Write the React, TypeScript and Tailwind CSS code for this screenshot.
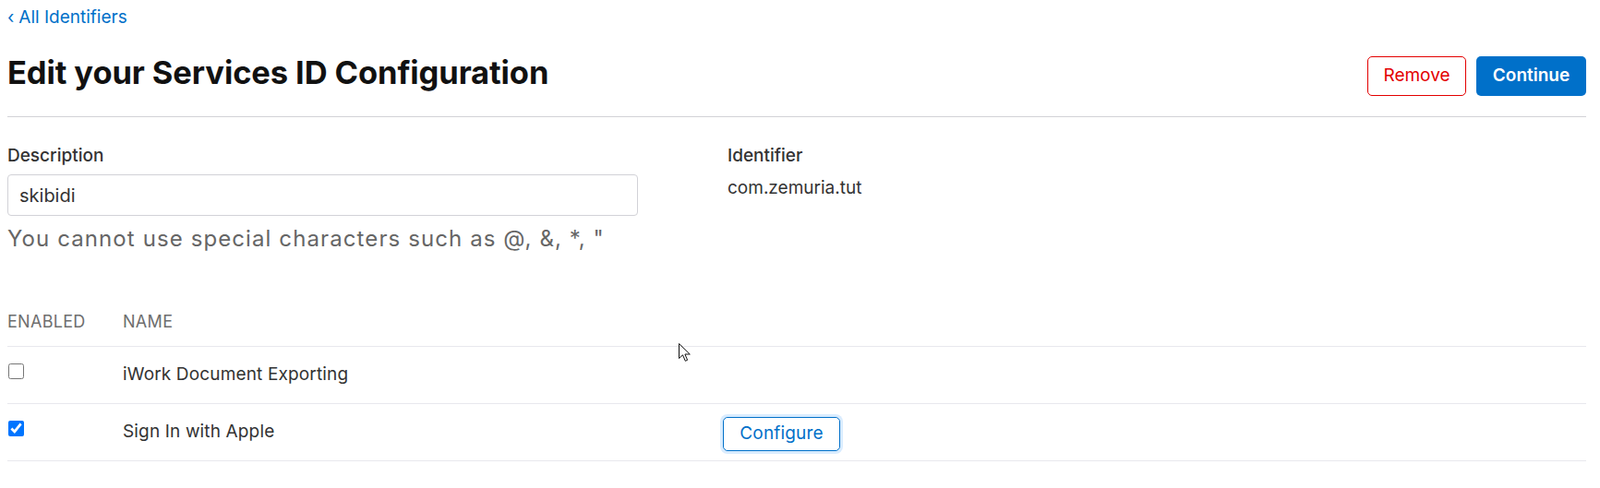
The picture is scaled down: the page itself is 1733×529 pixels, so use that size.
import { ChevronLeft } from "lucide-react"

const rows = [
    { name: "iWork Document Exporting", checked: false, configure: false },
    { name: "Sign In with Apple", checked: true, configure: true },
]

const App = () => {
    return (
        <div className="relative min-h-[529px] bg-white pl-2 pr-[15px] text-[#333] font-['Inter',sans-serif]">
            {/* back link */}
            <div className="flex items-center pt-[8px] text-[19px] leading-[22px] text-[#0070c9]">
                <span className="mr-[5px]">‹</span>
                <span>All Identifiers</span>
            </div>

            {/* header */}
            <div className="mt-[31px] flex items-start justify-between border-b border-[#d2d2d7] pb-[22px]">
                <h1 className="mt-[-3px] text-[34.5px] font-bold leading-[42px] tracking-[-0.1px] text-[#111]">
                    Edit your Services ID Configuration
                </h1>
                <div className="flex gap-[11px]">
                    <button className="h-[43px] w-[107px] rounded-[5px] border border-[#e30000] text-[19px] text-[#e30000]">
                        Remove
                    </button>
                    <button className="h-[43px] w-[119px] rounded-[5px] bg-[#0070c9] text-[19px] font-semibold text-white">
                        Continue
                    </button>
                </div>
            </div>

            {/* form */}
            <div className="mt-[31px] flex">
                <div className="w-[780px]">
                    <label className="block text-[19px] font-medium leading-[22px] text-[#333]">Description</label>
                    <input
                        readOnly
                        value="skibidi"
                        className="mt-[9px] h-[45px] w-[683px] rounded-[4px] border border-[#d2d2d7] px-[12px] text-[20px] text-[#333] outline-none"
                    />
                    <p className="mt-[10px] text-[24px] leading-[30px] tracking-[1.1px] text-[#666]">
                        You cannot use special characters such as @, &amp;, *, "
                    </p>
                </div>
                <div>
                    <p className="text-[19px] font-medium leading-[22px] text-[#333]">Identifier</p>
                    <p className="mt-[13px] text-[19px] leading-[22px] text-[#333]">com.zemuria.tut</p>
                </div>
            </div>

            {/* capabilities table */}
            <div className="mt-[64px]">
                <div className="grid grid-cols-[125px_650px_1fr] border-b border-[#e8e8ed] pb-[15px] text-[18px] leading-[22px] tracking-[0.3px] text-[#6e6e6e]">
                    <span>ENABLED</span>
                    <span>NAME</span>
                    <span></span>
                </div>
                {rows.map((row) => (
                    <div
                        key={row.name}
                        className="grid h-[62px] grid-cols-[125px_650px_1fr] items-center border-b border-[#e8e8ed] text-[19px] tracking-[0.15px] text-[#333]"
                    >
                        <div className="flex items-center">
                            <input
                                type="checkbox"
                                readOnly
                                checked={row.checked}
                                className="mb-[8px] ml-[1px] h-[17px] w-[17px] accent-[#0075ff]"
                            />
                        </div>
                        <span>{row.name}</span>
                        <div>
                            {row.configure && (
                                <button className="mt-[4px] h-[37px] w-[127px] rounded-[5px] border border-[#0070c9] text-[19px] text-[#0070c9] shadow-[0_0_0_3px_rgba(0,125,250,0.15)]">
                                    Configure
                                </button>
                            )}
                        </div>
                    </div>
                ))}
            </div>

            {/* mouse pointer */}
            <svg className="absolute left-[735px] top-[372px]" width="14" height="22" viewBox="0 0 14 22">
                <path d="M0.5 0.5 L0.5 16.5 L4.5 12.8 L7.3 19.3 L9.6 18.3 L6.9 12 L12.3 12 Z" fill="white" stroke="#111" strokeWidth="1" />
            </svg>
        </div>
    )
}

export default App
